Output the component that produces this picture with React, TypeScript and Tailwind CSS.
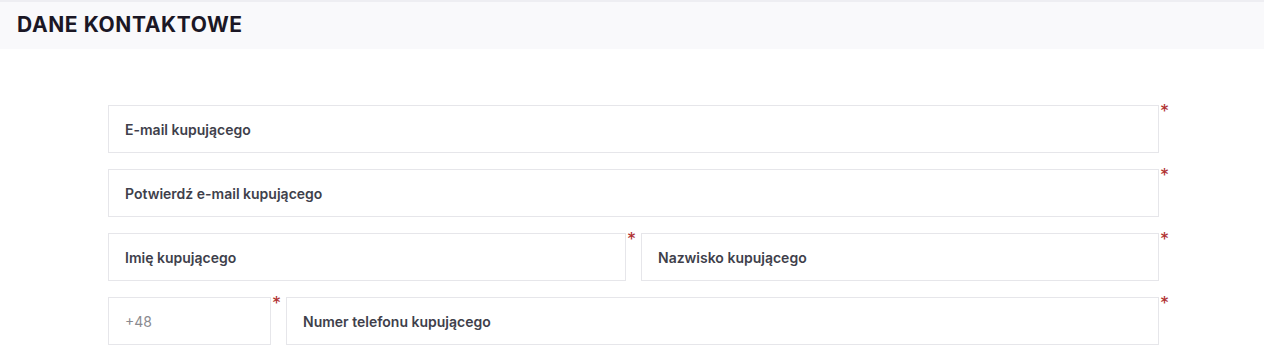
const font = { fontFamily: "Inter, 'Noto Sans', sans-serif" };

function Field({ label, placeholder, className }: { label?: string; placeholder?: string; className?: string }) {
  return (
    <div className={`relative ${className ?? ""}`}>
      <div className="flex h-12 items-center border border-[#e6e6ea] bg-white px-4">
        {label ? (
          <span className="text-[14px] font-semibold text-[#403f4b]">{label}</span>
        ) : (
          <span className="text-[14px] text-[#8a8a90]">{placeholder}</span>
        )}
      </div>
      <span className="absolute left-full top-[-2px] ml-[1px] text-[18px] leading-none text-[#b03030]">*</span>
    </div>
  );
}

export default function App() {
  return (
    <div className="min-h-[361px] bg-white" style={font}>
      <div className="border-t-2 border-[#eeeef2] bg-[#f9f9fb] px-[17px] pb-[12px] pt-[10px]">
        <h2 className="text-[21px] font-bold uppercase leading-[25px] tracking-[0.6px] text-[#1b1725]">Dane kontaktowe</h2>
      </div>
      <div className="ml-[108px] mt-[56px] flex w-[1051px] flex-col gap-4">
        <Field label="E-mail kupującego" />
        <Field label="Potwierdź e-mail kupującego" />
        <div className="flex gap-[15px]">
          <Field label="Imię kupującego" className="flex-1" />
          <Field label="Nazwisko kupującego" className="flex-1" />
        </div>
        <div className="flex gap-[15px]">
          <Field placeholder="+48" className="w-[163px]" />
          <Field label="Numer telefonu kupującego" className="flex-1" />
        </div>
      </div>
    </div>
  );
}
